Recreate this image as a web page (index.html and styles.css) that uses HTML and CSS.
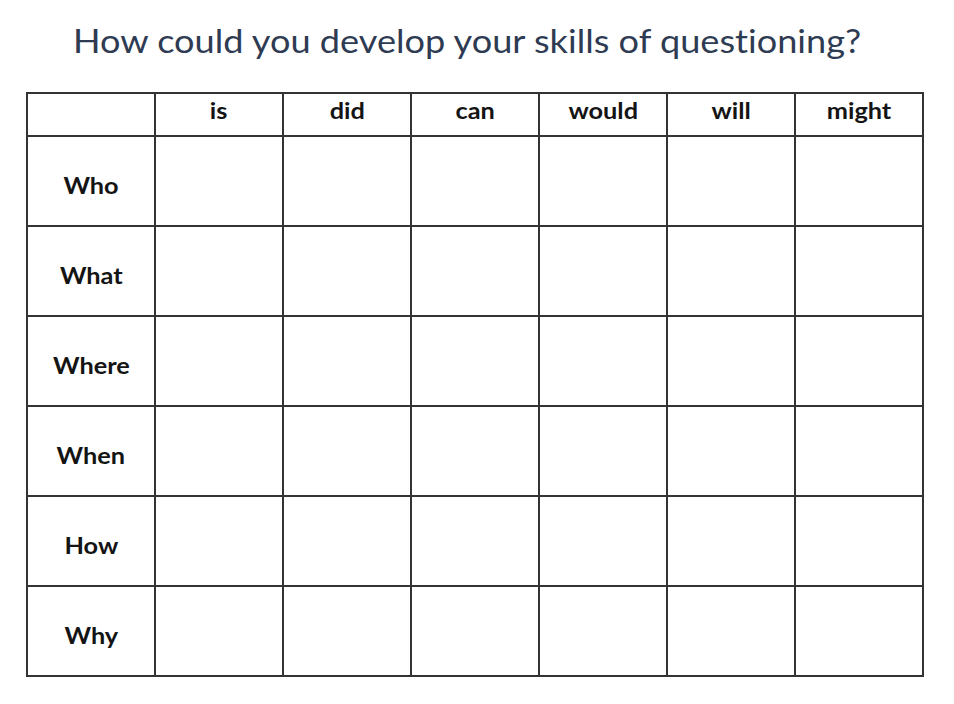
FILE: index.html
```html
<!DOCTYPE html>
<html>
<head>
<meta charset="utf-8">
<link rel="stylesheet" href="styles.css">
</head>
<body>
<div class="page">
  <h1 class="title"><span class="stretch">How could you develop your skills of questioning?</span></h1>
  <table class="grid">
    <thead>
      <tr class="head-row">
        <th></th>
        <th><span class="lbl">is</span></th>
        <th><span class="lbl">did</span></th>
        <th><span class="lbl">can</span></th>
        <th><span class="lbl">would</span></th>
        <th><span class="lbl">will</span></th>
        <th><span class="lbl">might</span></th>
      </tr>
    </thead>
    <tbody>
      <tr><th><span class="lbl">Who</span></th><td></td><td></td><td></td><td></td><td></td><td></td></tr>
      <tr><th><span class="lbl">What</span></th><td></td><td></td><td></td><td></td><td></td><td></td></tr>
      <tr><th><span class="lbl">Where</span></th><td></td><td></td><td></td><td></td><td></td><td></td></tr>
      <tr><th><span class="lbl">When</span></th><td></td><td></td><td></td><td></td><td></td><td></td></tr>
      <tr><th><span class="lbl">How</span></th><td></td><td></td><td></td><td></td><td></td><td></td></tr>
      <tr><th><span class="lbl">Why</span></th><td></td><td></td><td></td><td></td><td></td><td></td></tr>
    </tbody>
  </table>
</div>
</body>
</html>
```
FILE: styles.css
```css
html, body {
  margin: 0;
  padding: 0;
  background: #ffffff;
}
.page {
  width: 954px;
  height: 704px;
  padding-top: 18px;
  box-sizing: border-box;
}
.title {
  margin: 0 0 0 73px;
  font-family: Lato, "Open Sans", sans-serif;
  font-weight: 400;
  font-size: 33px;
  line-height: 44px;
  height: 44px;
  color: #2e3b52;
  white-space: nowrap;
  font-variant-ligatures: none;
}
.stretch {
  display: inline-block;
  transform: scaleX(1.095);
  transform-origin: left center;
}
.grid {
  margin: 30px 0 0 26px;
  border-collapse: collapse;
  table-layout: fixed;
  width: 897px;
  font-family: Lato, "Open Sans", sans-serif;
  font-weight: 700;
  color: #141414;
  font-variant-ligatures: none;
}
.grid th, .grid td {
  border: 2px solid #333333;
  width: 128px;
  padding: 0;
  text-align: center;
}
.lbl {
  display: inline-block;
  transform: scaleX(1.15);
  transform-origin: center center;
}
.head-row th {
  height: 43px;
  font-size: 22px;
  line-height: 26px;
  vertical-align: top;
  padding-top: 4px;
  box-sizing: border-box;
}
.grid tbody tr {
  height: 90px;
}
.grid tbody th {
  font-size: 22px;
  line-height: 26px;
  padding-top: 10px;
  box-sizing: border-box;
}
```
